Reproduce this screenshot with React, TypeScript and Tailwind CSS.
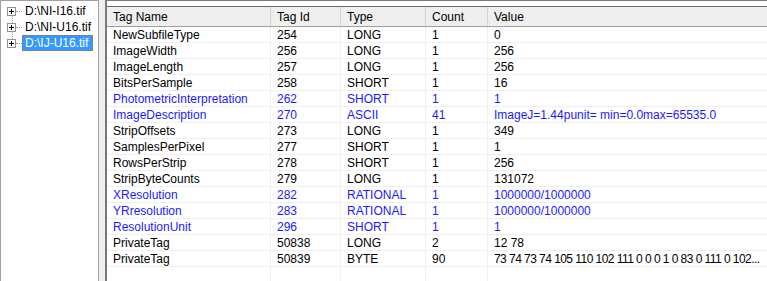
import React from 'react';

interface TagRow {
  name: string;
  id: string;
  type: string;
  count: string;
  value: string;
  blue?: boolean;
  tight?: boolean;
}

const rows: TagRow[] = [
  { name: 'NewSubfileType', id: '254', type: 'LONG', count: '1', value: '0' },
  { name: 'ImageWidth', id: '256', type: 'LONG', count: '1', value: '256' },
  { name: 'ImageLength', id: '257', type: 'LONG', count: '1', value: '256' },
  { name: 'BitsPerSample', id: '258', type: 'SHORT', count: '1', value: '16' },
  { name: 'PhotometricInterpretation', id: '262', type: 'SHORT', count: '1', value: '1', blue: true },
  { name: 'ImageDescription', id: '270', type: 'ASCII', count: '41', value: 'ImageJ=1.44punit= min=0.0max=65535.0', blue: true },
  { name: 'StripOffsets', id: '273', type: 'LONG', count: '1', value: '349' },
  { name: 'SamplesPerPixel', id: '277', type: 'SHORT', count: '1', value: '1' },
  { name: 'RowsPerStrip', id: '278', type: 'SHORT', count: '1', value: '256' },
  { name: 'StripByteCounts', id: '279', type: 'LONG', count: '1', value: '131072' },
  { name: 'XResolution', id: '282', type: 'RATIONAL', count: '1', value: '1000000/1000000', blue: true },
  { name: 'YRresolution', id: '283', type: 'RATIONAL', count: '1', value: '1000000/1000000', blue: true },
  { name: 'ResolutionUnit', id: '296', type: 'SHORT', count: '1', value: '1', blue: true },
  { name: 'PrivateTag', id: '50838', type: 'LONG', count: '2', value: '12 78' },
  { name: 'PrivateTag', id: '50839', type: 'BYTE', count: '90', value: '73 74 73 74 105 110 102 111 0 0 0 1 0 83 0 111 0 102...', tight: true },
];

const files = ['D:\\NI-I16.tif', 'D:\\NI-U16.tif', 'D:\\IJ-U16.tif'];

// plus box used by the tree view
const ExpandBox = () => (
  <div className="w-[9px] h-[9px] border border-[#919191] bg-white relative shrink-0">
    <div className="absolute left-[1px] top-[3px] w-[5px] h-[1px] bg-black" />
    <div className="absolute left-[3px] top-[1px] w-[1px] h-[5px] bg-black" />
  </div>
);

const FileTree = () => (
  <div className="w-[99px] h-full bg-white border-l border-t border-r border-[#a0a0a0] pt-[2px] relative">
    {/* vertical dotted connector */}
    <div className="absolute left-[11px] top-[15px] h-[25px] border-l border-dotted border-[#a0a0a0]" />
    {files.map((f, i) => {
      const selected = i === files.length - 1;
      return (
        <div key={f} className="h-[16px] flex items-center pl-[6px]">
          <ExpandBox />
          <div className="w-[6px] border-t border-dotted border-[#a0a0a0]" />
          <div
            className={
              selected
                ? 'h-[16px] flex items-center pl-[2px] pr-[4px] bg-[#3399ff] text-white border border-dotted border-[#c06a20]'
                : 'h-[16px] flex items-center px-[3px] text-black'
            }
          >
            {f}
          </div>
        </div>
      );
    })}
  </div>
);

const cellBase = 'shrink-0 pl-[6px] border-r border-[#f0f0f0] whitespace-nowrap overflow-hidden';

const TagTable = () => (
  <div className="flex-1 h-full ml-[6px] border-l-2 border-t border-[#7a7a7a] bg-white flex flex-col overflow-hidden">
    <div className="h-[5px] shrink-0 bg-white" />
    {/* header */}
    <div className="h-[21px] shrink-0 flex border-t border-b border-t-[#696969] border-b-[#a0a0a0] bg-[#efefef] text-black">
      <div className="w-[164px] shrink-0 pl-[6px] flex items-center border-r border-[#d5d5d5]">Tag Name</div>
      <div className="w-[70px] shrink-0 pl-[6px] flex items-center border-r border-[#d5d5d5]">Tag Id</div>
      <div className="w-[85px] shrink-0 pl-[6px] flex items-center border-r border-[#d5d5d5]">Type</div>
      <div className="w-[62px] shrink-0 pl-[6px] flex items-center border-r border-[#d5d5d5]">Count</div>
      <div className="flex-1 pl-[6px] flex items-center">Value</div>
    </div>
    {rows.map((r, i) => (
      <div
        key={i}
        className={`h-[16px] shrink-0 flex items-center border-b border-[#f0f0f0] leading-[16px] pt-[1px] ${r.blue ? 'text-[#1a1aff]' : 'text-black'}`}
      >
        <div className={`${cellBase} w-[164px]`}>{r.name}</div>
        <div className={`${cellBase} w-[70px]`}>{r.id}</div>
        <div className={`${cellBase} w-[85px]`}>{r.type}</div>
        <div className={`${cellBase} w-[62px]`}>{r.count}</div>
        <div className={`flex-1 pl-[6px] whitespace-nowrap overflow-hidden ${r.tight ? 'tracking-[-0.55px]' : ''}`}>{r.value}</div>
      </div>
    ))}
    {/* empty area keeps the column lines */}
    <div className="flex-1 flex">
      <div className="w-[164px] shrink-0 border-r border-[#f0f0f0]" />
      <div className="w-[70px] shrink-0 border-r border-[#f0f0f0]" />
      <div className="w-[85px] shrink-0 border-r border-[#f0f0f0]" />
      <div className="w-[62px] shrink-0 border-r border-[#f0f0f0]" />
      <div className="flex-1" />
    </div>
  </div>
);

export default function App() {
  return (
    <div
      className="w-[767px] h-[281px] flex bg-[#f0f0f0] overflow-hidden text-[12px]"
      style={{ fontFamily: '"Liberation Sans", Arial, sans-serif' }}
    >
      <FileTree />
      <TagTable />
    </div>
  );
}
